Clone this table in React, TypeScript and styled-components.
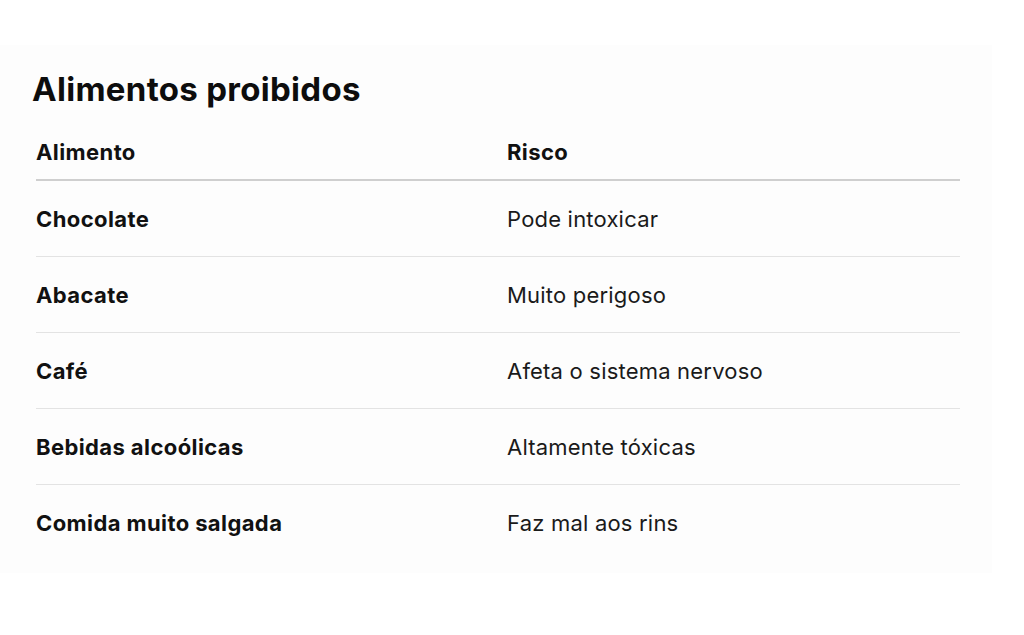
import React from 'react'
import styled, { createGlobalStyle } from 'styled-components'

const rows = [
  { food: 'Chocolate', risk: 'Pode intoxicar' },
  { food: 'Abacate', risk: 'Muito perigoso' },
  { food: 'Café', risk: 'Afeta o sistema nervoso' },
  { food: 'Bebidas alcoólicas', risk: 'Altamente tóxicas' },
  { food: 'Comida muito salgada', risk: 'Faz mal aos rins' },
]

const App = () => {
  return (
    <Page>
      <GlobalStyle />
      <Panel>
        <Title>Alimentos proibidos</Title>
        <Table>
          <HeadRow>
            <HeadCell>Alimento</HeadCell>
            <HeadCell>Risco</HeadCell>
          </HeadRow>
          {rows.map((r, i) => (
            <Row key={r.food} last={i === rows.length - 1}>
              <FoodCell>{r.food}</FoodCell>
              <RiskCell>{r.risk}</RiskCell>
            </Row>
          ))}
        </Table>
      </Panel>
    </Page>
  )
}

export default App

const GlobalStyle = createGlobalStyle`
  html, body {
    margin: 0;
    padding: 0;
    background: #ffffff;
  }
  body {
    font-family: Inter, "Noto Sans", sans-serif;
    color: #111111;
  }
`

const Page = styled.div`
  width: 1024px;
  height: 635px;
  padding-top: 45px;
  box-sizing: border-box;
  background: #ffffff;
`

const Panel = styled.div`
  width: 992px;
  background: #fdfdfd;
  padding: 22px 32px 12px 32px;
  box-sizing: border-box;
`

const Title = styled.h1`
  margin: 0;
  font-size: 33px;
  font-weight: 700;
  line-height: 44px;
  letter-spacing: 0.3px;
  color: #0d0d0d;
`

const Table = styled.div`
  margin-left: 4px;
  width: 924px;
`

const HeadRow = styled.div`
  display: grid;
  grid-template-columns: 471px 1fr;
  align-items: end;
  height: 70px;
  padding-bottom: 15px;
  border-bottom: 2px solid #cfcfcf;
  box-sizing: border-box;
`

const Row = styled.div<{ last?: boolean }>`
  display: grid;
  grid-template-columns: 471px 1fr;
  align-items: center;
  height: 76px;
  border-bottom: ${(p) => (p.last ? 'none' : '1px solid #e3e3e3')};
  box-sizing: border-box;
`

const HeadCell = styled.div`
  font-size: 22px;
  line-height: 24px;
  font-weight: 700;
  letter-spacing: 0.4px;
  color: #111111;
`

const FoodCell = styled.div`
  font-size: 22px;
  line-height: 24px;
  font-weight: 700;
  letter-spacing: 0.4px;
  color: #111111;
`

const RiskCell = styled.div`
  font-size: 22px;
  line-height: 24px;
  font-weight: 400;
  letter-spacing: 0.2px;
  color: #1a1a1a;
`
